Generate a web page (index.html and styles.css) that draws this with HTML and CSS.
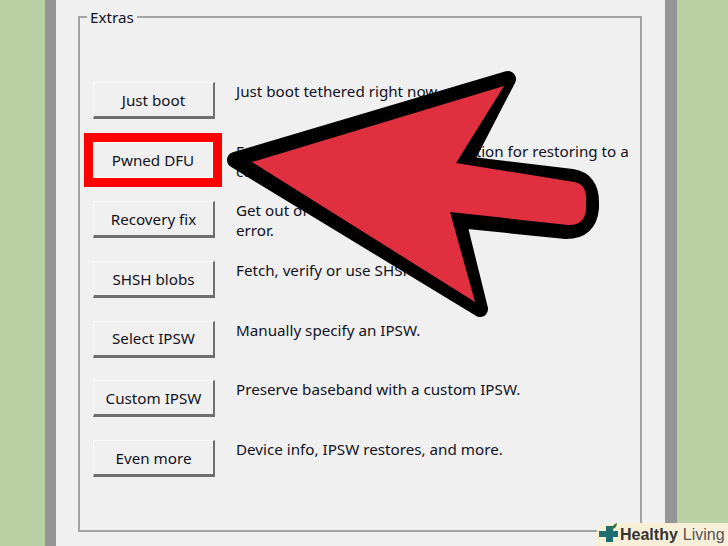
FILE: index.html
```html
<!DOCTYPE html>
<html>
<head>
    <title>Extras</title>
    <link rel="stylesheet" href="styles.css">
</head>
<body>
    <div class="window">
        <div class="panel">
            <fieldset class="extras">
                <legend>Extras</legend>
                <div class="row">
                    <button type="button">Just boot</button>
                    <p>Just boot tethered right now.</p>
                </div>
                <div class="row">
                    <div class="marked"><button type="button">Pwned DFU</button></div>
                    <p>Enter pwned DFU mode, a fine option for restoring to a custom IPSW.</p>
                </div>
                <div class="row">
                    <button type="button">Recovery fix</button>
                    <p>Get out of recovery mode after a restore<br>error.</p>
                </div>
                <div class="row">
                    <button type="button">SHSH blobs</button>
                    <p>Fetch, verify or use SHSH blobs.</p>
                </div>
                <div class="row">
                    <button type="button">Select IPSW</button>
                    <p>Manually specify an IPSW.</p>
                </div>
                <div class="row">
                    <button type="button">Custom IPSW</button>
                    <p>Preserve baseband with a custom IPSW.</p>
                </div>
                <div class="row">
                    <button type="button">Even more</button>
                    <p>Device info, IPSW restores, and more.</p>
                </div>
            </fieldset>
        </div>
    </div>

    <!-- big pointer over the window: black outline, then the red part on top -->
    <svg class="arrow" width="728" height="546" viewBox="0 0 728 546">
        <path d="M235 160 L508 79 L464 164 L572 177 Q591 180 591 202 L591 208 Q589 231 566 231 L458 220 L480 309 Z" fill="#000" stroke="#000" stroke-width="16" stroke-linejoin="round"/>
        <path d="M252 162 L504 86 L456 163 L574 182 Q586 184 586 198 L586 210 Q584 226 568 225 L450 212 L475 302 Z" fill="#e03040"/>
    </svg>

    <div class="badge">
        <svg width="20" height="23" viewBox="0 0 20 23">
            <path d="M8 3h7v5h5v6h-5v5H8v-5H1V8h7z" fill="#1f6f70"/>
            <path d="M14 6c0-3 2-5 5-6 0 3-2 6-5 6z" fill="#3d7a35"/>
        </svg>
        <span class="brand">Healthy</span><span class="brand-light">Living</span>
    </div>
</body>
</html>
```

FILE: styles.css
```css
html, body {
    margin: 0;
    height: 546px;
    overflow: hidden;
}

body {
    background-color: #b8d0a4;
    font-family: "Noto Sans", sans-serif;
    color: #12121e;
    position: relative;
}

.window {
    margin-left: 45px;
    width: 632px;
    height: 546px;
    box-sizing: border-box;
    border-left: 11px solid #959595;
    border-right: 12px solid #959595;
    background-color: #f0f0f0;
}

.panel {
    padding: 7px 23px 0 22px;
}

.extras {
    margin: 0;
    padding: 55px 0 0 13px;
    height: 525px;
    box-sizing: border-box;
    border: 2px solid #a3a3a3;
    border-radius: 0;
    font-size: 15.2px;
}

.extras legend {
    padding: 0 3px;
    margin-left: -6px;
    line-height: 20px;
}

.row {
    display: flex;
    height: 59.7px;
    align-items: flex-start;
}

.row button, .marked {
    flex: none;
}

button {
    width: 122px;
    height: 37px;
    padding: 0;
    background-color: #f0f0f0;
    font-family: inherit;
    font-size: 15.2px;
    color: inherit;
    border: 1px solid;
    border-color: #fafafa #6e6e6e #6e6e6e #fafafa;
    border-width: 1px 2px 3px 1px;
}

.row p {
    margin: -1px 0 0 21px;
    width: 400px;
    line-height: 20px;
}

.marked {
    width: 120px;
    height: 36px;
    margin-right: 2px;
    box-shadow: 0 0 0 9px #fe0000;
}

.marked button {
    display: block;
    height: 36px;
    width: 120px;
    border-width: 1px;
    border-color: #fafafa;
}

.arrow {
    position: absolute;
    left: 0;
    top: 0;
}

.badge {
    position: absolute;
    right: 0;
    bottom: 0;
    width: 132px;
    height: 23px;
    box-sizing: border-box;
    padding-left: 2px;
    display: flex;
    align-items: center;
    background-color: #f8efd8;
    border-top-left-radius: 12px;
    font-family: "Liberation Sans", sans-serif;
    font-size: 16px;
    color: #333;
    white-space: nowrap;
}

.brand {
    font-weight: bold;
    margin: 0 5px 0 2px;
}

.brand-light {
    color: #555;
}
```
